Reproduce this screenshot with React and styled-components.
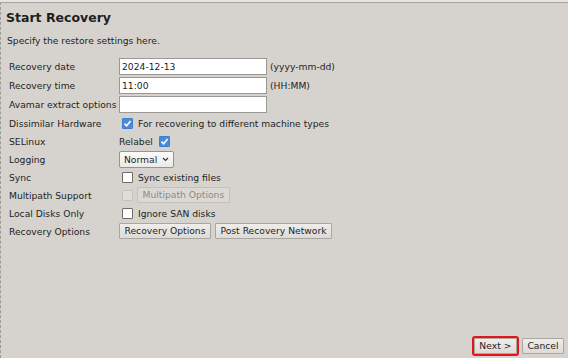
import React from "react";
import styled, { createGlobalStyle } from "styled-components";

const GlobalStyle = createGlobalStyle`
  html, body {
    margin: 0;
    padding: 0;
    background: #e6e4e1;
  }
  body {
    font-family: "DejaVu Sans", "Liberation Sans", sans-serif;
    font-size: 9.2px;
    color: #1e1e1e;
  }
`;

const Frame = styled.div`
  box-sizing: border-box;
  margin-top: 2px;
  height: 356px;
  display: flex;
  flex-direction: column;
  background: #d6d3ce;
  border-top: 1px solid #a3a19d;
  border-left: 1px dashed #9c9a96;
  padding: 6px 4px 4px 5px;
`;

const Title = styled.h1`
  margin: 1px 0 0 0;
  font-size: 12.5px;
  font-weight: bold;
  line-height: 16px;
`;

const Subtitle = styled.p`
  margin: 9px 0 0 1px;
  line-height: 12px;
`;

const Form = styled.div`
  display: grid;
  grid-template-columns: 110px auto;
  grid-template-rows: 19px 19px 19px 18px 18px 18px 18px 18px 18px 18px;
  margin: 10px 0 0 3px;
  align-items: center;
`;

const Label = styled.div`
  white-space: nowrap;
`;

const Field = styled.div`
  display: flex;
  align-items: center;
  gap: ${(p) => p.$gap || 4}px;
  padding-left: ${(p) => p.$indent || 0}px;
`;

const TextInput = styled.input`
  box-sizing: border-box;
  width: 148px;
  height: 17px;
  border: 1px solid #9b9995;
  background: #fff;
  font: inherit;
  color: #1e1e1e;
  padding: 0 2px;
  margin: 0;
  outline: none;
`;

const Box = styled.span`
  box-sizing: border-box;
  display: inline-flex;
  align-items: center;
  justify-content: center;
  width: 11px;
  height: 11px;
  border-radius: 1px;
  border: 1px solid
    ${(p) => (p.$checked ? "#3f7fcf" : p.$disabled ? "#c4c2be" : "#6c6b69")};
  background: ${(p) =>
    p.$checked ? "#4a8ad8" : p.$disabled ? "#dfddda" : "#fff"};
`;

const Checkbox = ({ checked, disabled }) => (
  <Box $checked={checked} $disabled={disabled}>
    {checked && (
      <svg width="9" height="9" viewBox="0 0 9 9">
        <path
          d="M1.5 4.6 L3.6 6.7 L7.6 2"
          fill="none"
          stroke="#fff"
          strokeWidth="1.6"
        />
      </svg>
    )}
  </Box>
);

const Button = styled.button`
  box-sizing: border-box;
  height: 16px;
  padding: 0 4.5px;
  margin: 0;
  font: inherit;
  line-height: 14px;
  color: ${(p) => (p.disabled ? "#8d8b88" : "#1e1e1e")};
  background: ${(p) =>
    p.disabled ? "#dcd9d4" : "linear-gradient(#efedea, #dedbd6)"};
  border: 1px solid ${(p) => (p.disabled ? "#c3c1bc" : "#a9a7a2")};
  border-radius: 1px;
  outline: ${(p) => (p.$focus ? "2px solid #e3141c" : "none")};
  outline-offset: 0;
`;

const Select = styled.div`
  box-sizing: border-box;
  display: inline-flex;
  align-items: center;
  gap: 5px;
  height: 17px;
  padding: 0 4px;
  border: 1px solid #96948f;
  border-radius: 2px;
  background: linear-gradient(#fbfbfa, #eceae7);
`;

const Hint = styled.span`
  white-space: nowrap;
`;

const Footer = styled.div`
  margin-top: auto;
  display: flex;
  justify-content: flex-end;
  gap: 5px;
`;

export default function App() {
  return (
    <>
      <GlobalStyle />
      <Frame>
        <Title>Start Recovery</Title>
        <Subtitle>Specify the restore settings here.</Subtitle>
        <Form>
          <Label>Recovery date</Label>
          <Field $gap={3}>
            <TextInput defaultValue="2024-12-13" />
            <Hint>(yyyy-mm-dd)</Hint>
          </Field>

          <Label>Recovery time</Label>
          <Field $gap={3}>
            <TextInput defaultValue="11:00" />
            <Hint>(HH:MM)</Hint>
          </Field>

          <Label>Avamar extract options</Label>
          <Field>
            <TextInput defaultValue="" />
          </Field>

          <Label>Dissimilar Hardware</Label>
          <Field $indent={3} $gap={5}>
            <Checkbox checked />
            <Hint>For recovering to different machine types</Hint>
          </Field>

          <Label>SELinux</Label>
          <Field $gap={6}>
            <Hint>Relabel</Hint>
            <Checkbox checked />
          </Field>

          <Label>Logging</Label>
          <Field>
            <Select>
              <span>Normal</span>
              <svg width="7" height="5" viewBox="0 0 7 5">
                <path d="M1 1 L3.5 3.5 L6 1" fill="none" stroke="#333" strokeWidth="1.1" />
              </svg>
            </Select>
          </Field>

          <Label>Sync</Label>
          <Field $indent={3} $gap={5}>
            <Checkbox />
            <Hint>Sync existing files</Hint>
          </Field>

          <Label>Multipath Support</Label>
          <Field $indent={3} $gap={4}>
            <Checkbox disabled />
            <Button disabled>Multipath Options</Button>
          </Field>

          <Label>Local Disks Only</Label>
          <Field $indent={3} $gap={5}>
            <Checkbox />
            <Hint>Ignore SAN disks</Hint>
          </Field>

          <Label>Recovery Options</Label>
          <Field>
            <Button>Recovery Options</Button>
            <Button>Post Recovery Network</Button>
          </Field>
        </Form>
        <Footer>
          <Button $focus>Next &gt;</Button>
          <Button>Cancel</Button>
        </Footer>
      </Frame>
    </>
  );
}
